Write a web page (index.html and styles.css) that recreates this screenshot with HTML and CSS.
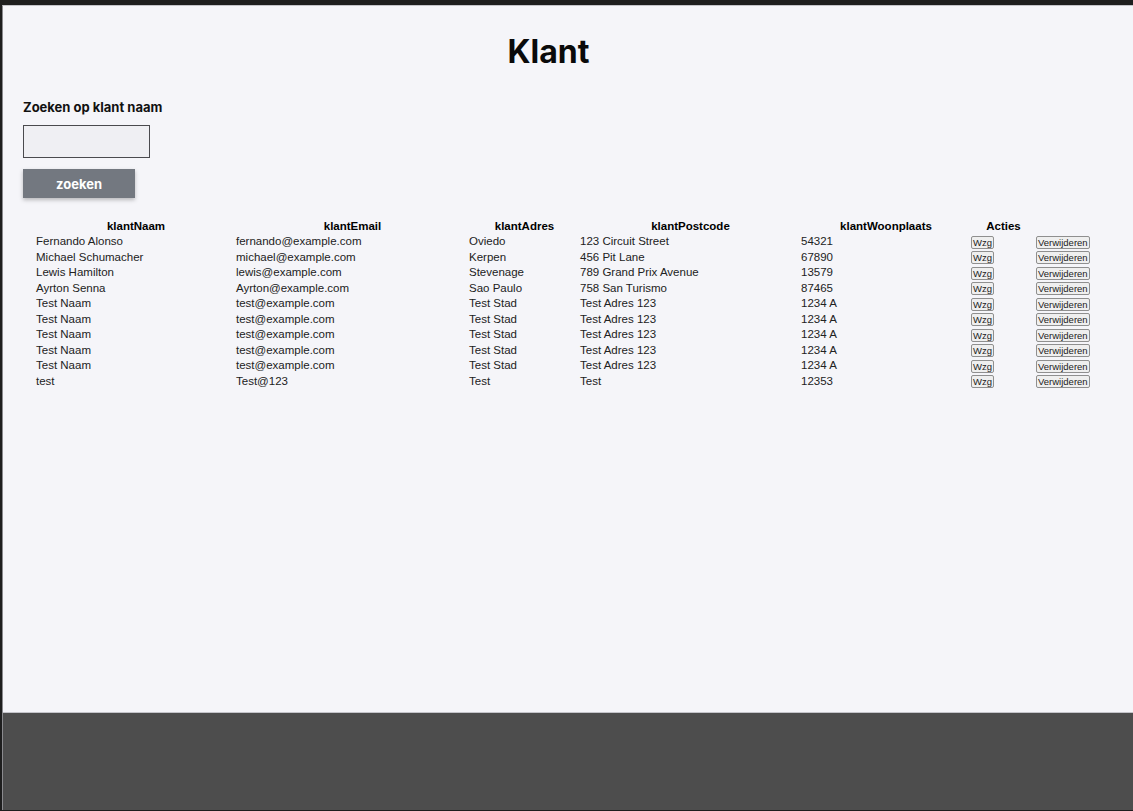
FILE: index.html
```html
<!DOCTYPE html>
<html lang="nl">
<head>
<meta charset="utf-8">
<title>Klant</title>
<link rel="stylesheet" href="styles.css">
</head>
<body>
<div class="app">
  <main class="main">
    <h1 class="title">Klant</h1>
    <div class="search">
      <label class="search-label" for="q">Zoeken op klant naam</label>
      <input class="search-input" id="q" type="text">
      <button class="search-btn" type="button">zoeken</button>
    </div>
    <table class="klanten">
      <colgroup>
        <col class="c1"><col class="c2"><col class="c3"><col class="c4"><col class="c5"><col class="c6"><col class="c7">
      </colgroup>
      <thead>
        <tr><th>klantNaam</th><th>klantEmail</th><th>klantAdres</th><th>klantPostcode</th><th>klantWoonplaats</th><th>Acties</th><th></th></tr>
      </thead>
      <tbody>
        <tr><td>Fernando Alonso</td><td>fernando@example.com</td><td>Oviedo</td><td>123 Circuit Street</td><td>54321</td><td><button class="act">Wzg</button></td><td><button class="act">Verwijderen</button></td></tr>
        <tr><td>Michael Schumacher</td><td>michael@example.com</td><td>Kerpen</td><td>456 Pit Lane</td><td>67890</td><td><button class="act">Wzg</button></td><td><button class="act">Verwijderen</button></td></tr>
        <tr><td>Lewis Hamilton</td><td>lewis@example.com</td><td>Stevenage</td><td>789 Grand Prix Avenue</td><td>13579</td><td><button class="act">Wzg</button></td><td><button class="act">Verwijderen</button></td></tr>
        <tr><td>Ayrton Senna</td><td>Ayrton@example.com</td><td>Sao Paulo</td><td>758 San Turismo</td><td>87465</td><td><button class="act">Wzg</button></td><td><button class="act">Verwijderen</button></td></tr>
        <tr><td>Test Naam</td><td>test@example.com</td><td>Test Stad</td><td>Test Adres 123</td><td>1234 A</td><td><button class="act">Wzg</button></td><td><button class="act">Verwijderen</button></td></tr>
        <tr><td>Test Naam</td><td>test@example.com</td><td>Test Stad</td><td>Test Adres 123</td><td>1234 A</td><td><button class="act">Wzg</button></td><td><button class="act">Verwijderen</button></td></tr>
        <tr><td>Test Naam</td><td>test@example.com</td><td>Test Stad</td><td>Test Adres 123</td><td>1234 A</td><td><button class="act">Wzg</button></td><td><button class="act">Verwijderen</button></td></tr>
        <tr><td>Test Naam</td><td>test@example.com</td><td>Test Stad</td><td>Test Adres 123</td><td>1234 A</td><td><button class="act">Wzg</button></td><td><button class="act">Verwijderen</button></td></tr>
        <tr><td>Test Naam</td><td>test@example.com</td><td>Test Stad</td><td>Test Adres 123</td><td>1234 A</td><td><button class="act">Wzg</button></td><td><button class="act">Verwijderen</button></td></tr>
        <tr><td>test</td><td>Test@123</td><td>Test</td><td>Test</td><td>12353</td><td><button class="act">Wzg</button></td><td><button class="act">Verwijderen</button></td></tr>
      </tbody>
    </table>
  </main>
  <footer class="footer"></footer>
</div>
</body>
</html>
```
FILE: styles.css
```css
* { box-sizing: border-box; }
html, body { margin: 0; height: 100%; }
body {
  background: #1e1e1e;
  padding: 5px 0 1px 2px;
  overflow: hidden;
}
.app {
  height: 805px;
  display: flex;
  flex-direction: column;
  background: #f5f5f9;
  border-top: 1px solid #c4c4c9;
  border-left: 1px solid #8a8a8e;
}
.main {
  flex: 1;
  padding: 0 20px;
  font-family: Inter, "Noto Sans", sans-serif;
}
.title {
  margin: 26px 0 0;
  padding-right: 39px;
  text-align: center;
  font-size: 32px;
  line-height: 39px;
  font-weight: 700;
  color: #0a0a0a;
}
.search {
  display: flex;
  flex-direction: column;
  align-items: flex-start;
  margin-top: 28px;
}
.search-label {
  font-size: 13px;
  line-height: 16px;
  font-weight: 700;
  color: #111;
}
.search-input {
  margin-top: 10px;
  width: 127px;
  height: 33px;
  border: 1px solid #4a4a4e;
  background: #efeff3;
  border-radius: 0;
  outline: none;
}
.search-btn {
  margin-top: 11px;
  width: 112px;
  height: 29px;
  border: none;
  background: #737880;
  color: #fff;
  font-family: Inter, "Noto Sans", sans-serif;
  font-size: 13px;
  font-weight: 700;
  box-shadow: 0 2px 4px rgba(0,0,0,0.25);
  cursor: pointer;
}
.klanten {
  margin: 21px 0 0 11px;
  table-layout: fixed;
  width: 1056px;
  border-collapse: separate;
  border-spacing: 0;
  font-family: "Liberation Sans", Arial, sans-serif;
  font-size: 11.5px;
  color: #222;
}
.c1 { width: 200px; }
.c2 { width: 233px; }
.c3 { width: 111px; }
.c4 { width: 221px; }
.c5 { width: 170px; }
.c6 { width: 65px; }
.c7 { width: 56px; }
.klanten th, .klanten td {
  padding: 1px 2px;
  line-height: 13.4px;
  height: 15.4px;
  white-space: nowrap;
  vertical-align: middle;
}
.klanten th {
  padding-left: 4px;
  padding-right: 0;
  font-weight: 700;
  color: #000;
  text-align: center;
}
.klanten td { text-align: left; }
.act {
  font-family: "Liberation Sans", Arial, sans-serif;
  font-size: 9.5px;
  line-height: 11px;
  padding: 0 1px;
  margin: 0;
  border: 1px solid #8f8f8f;
  border-radius: 2px;
  background: #efefef;
  color: #222;
  display: inline-block;
  vertical-align: middle;
}
.footer {
  height: 98px;
  flex: none;
  background: #4d4d4d;
  border-top: 1px solid #c4c4ca;
}
```
